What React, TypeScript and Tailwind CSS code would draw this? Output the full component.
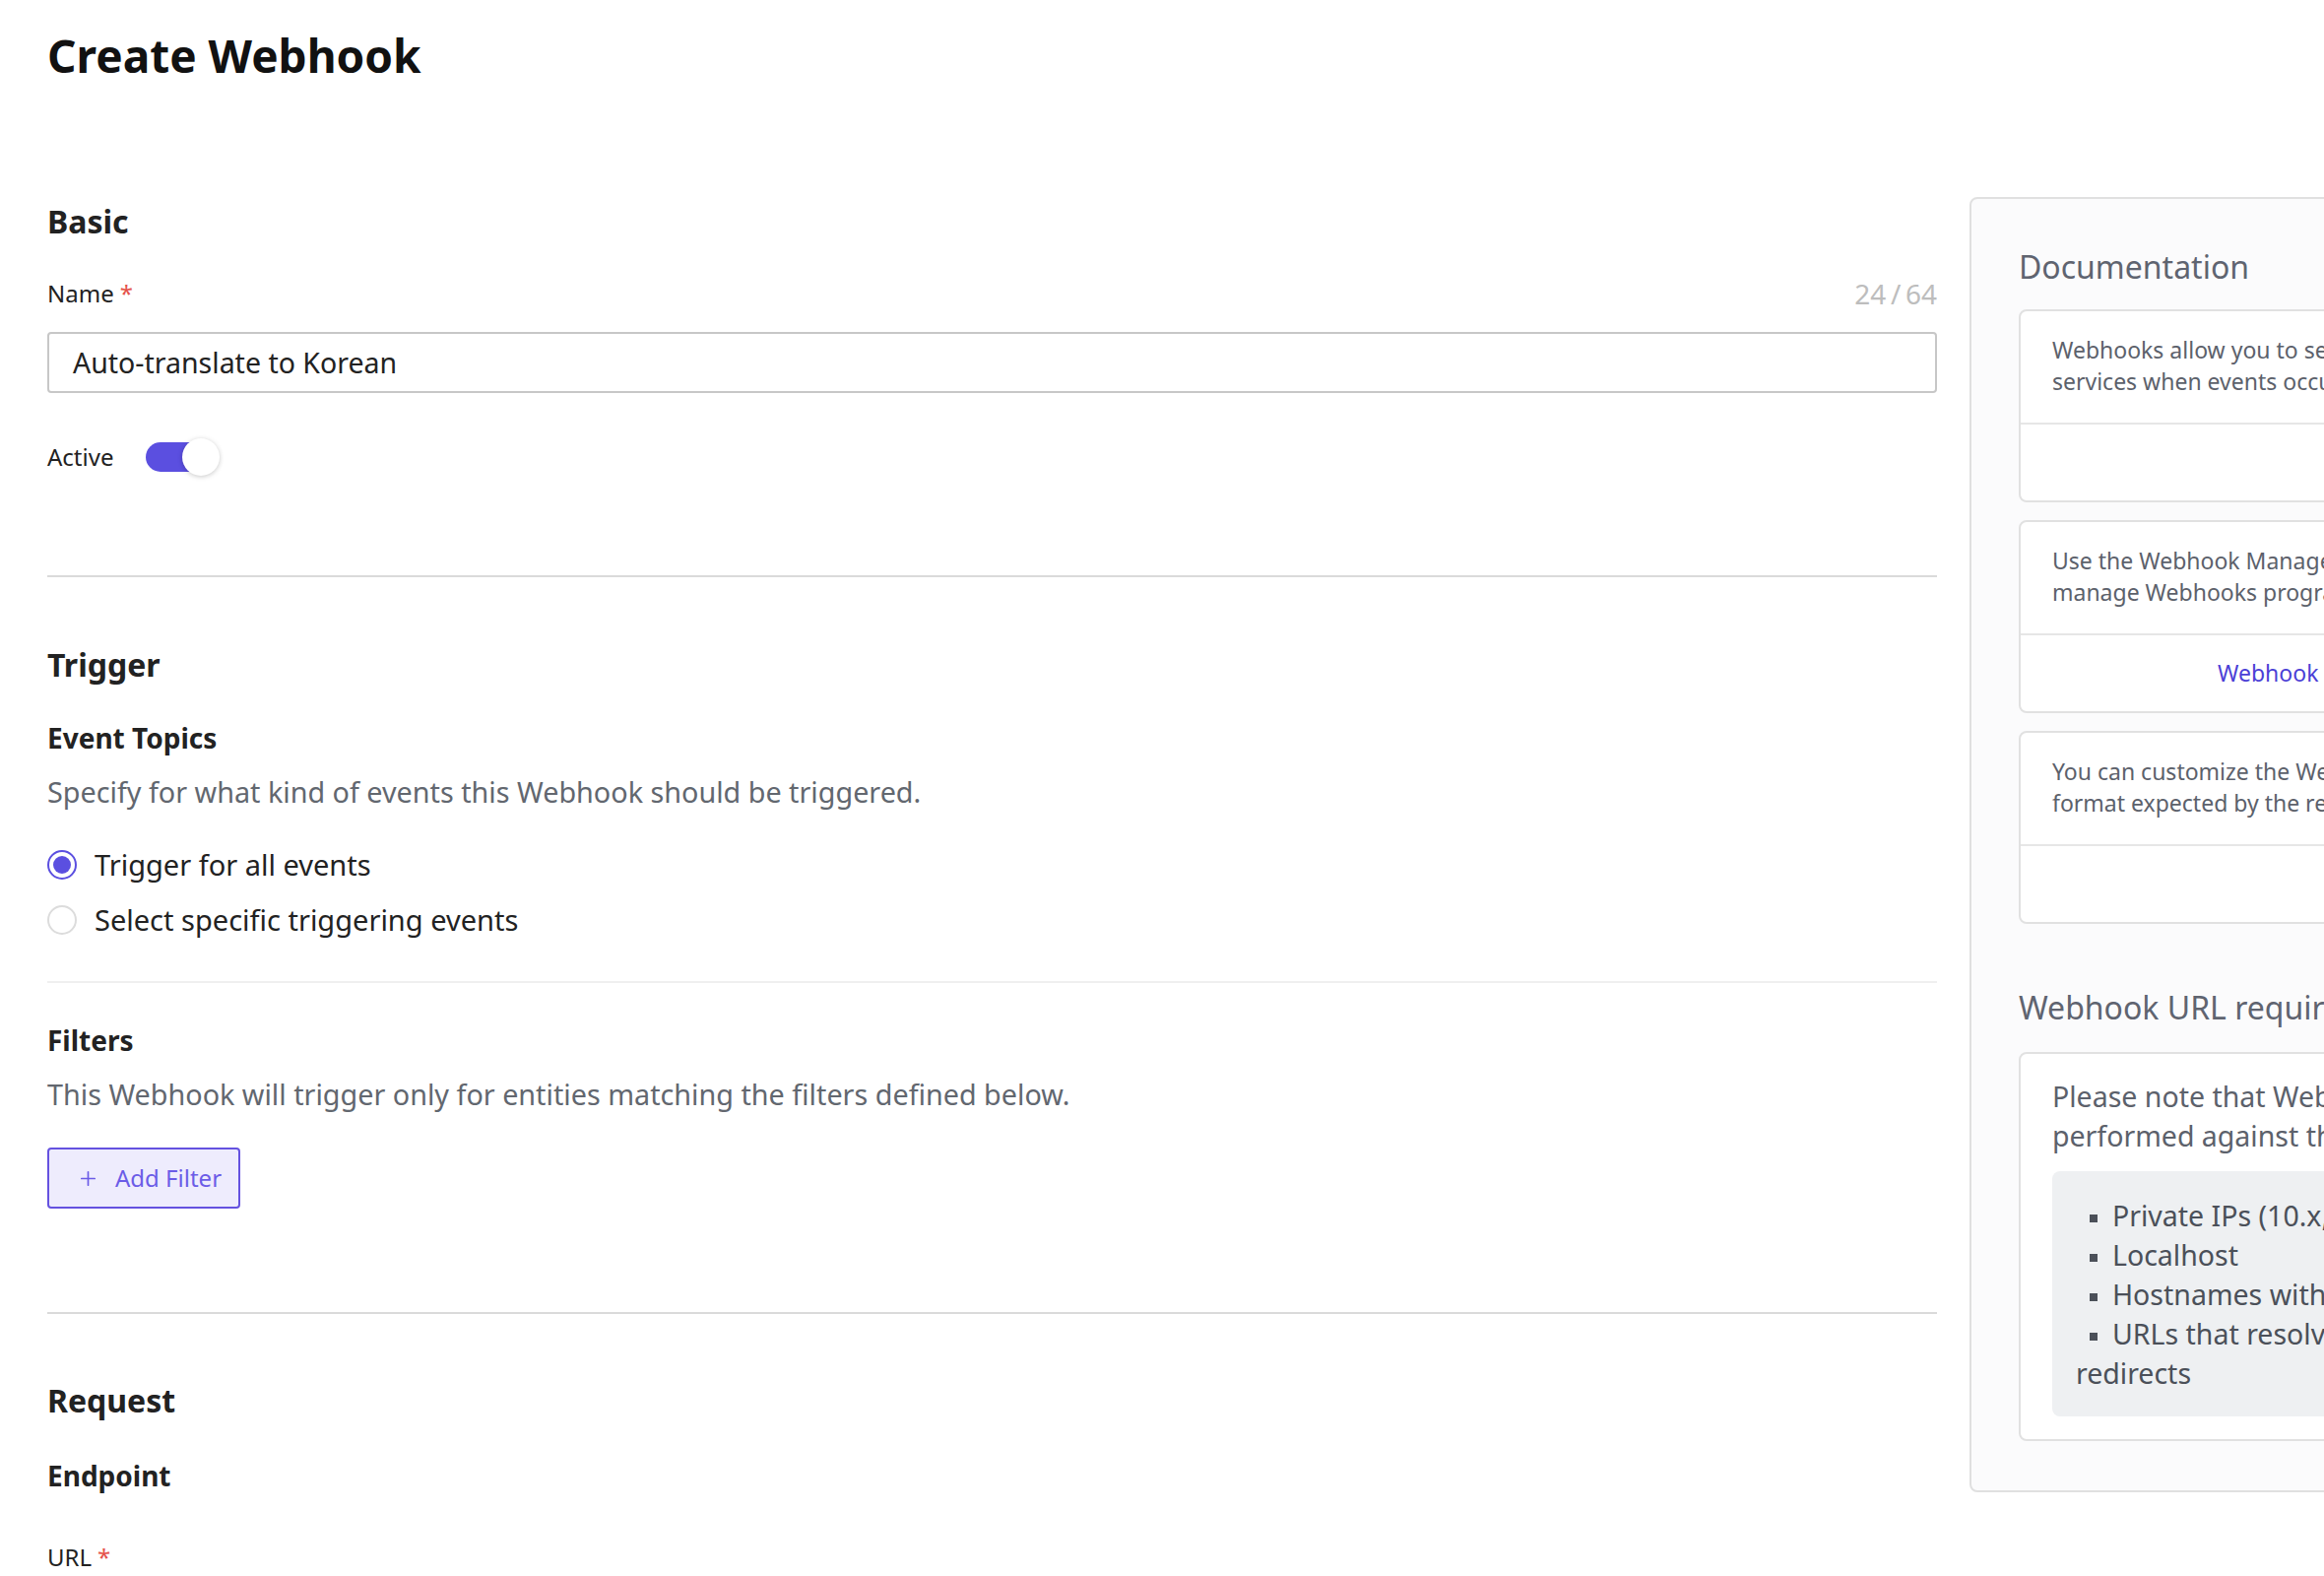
import { Plus } from 'lucide-react';

type RadioProps = { checked?: boolean; label: string; className?: string };

const Radio = ({ checked, label, className }: RadioProps) => (
  <div className={`flex h-10 items-center gap-[18px] ${className ?? ''}`}>
    <span
      className={
        checked
          ? 'flex h-[30px] w-[30px] items-center justify-center rounded-full border-2 border-[#5b4fe0] bg-white'
          : 'flex h-[30px] w-[30px] items-center justify-center rounded-full border-2 border-[#dcdcdc] bg-white'
      }
    >
      {checked && <span className="h-[18px] w-[18px] rounded-full bg-[#5b4fe0]" />}
    </span>
    <span className="text-[29px] leading-10 text-[#222]">{label}</span>
  </div>
);

type DocCardProps = { lines: [string, string]; link: string };

const DocCard = ({ lines, link }: DocCardProps) => (
  <div className="rounded-lg border-2 border-[#e1e1e1] bg-white">
    <p className="px-8 pt-[23px] pb-[26px] text-[23px] leading-8 whitespace-nowrap text-[#5c616b]">
      {lines[0]}
      <br />
      {lines[1]}
    </p>
    <div className="flex h-[79px] items-center justify-center border-t-2 border-[#e6e6e6] text-[23px] text-[#4b3fd6]">
      {link}
    </div>
  </div>
);

const urlRules = [
  'Private IPs (10.x, 192.168.x, 172.16.x)',
  'Localhost',
  'Hostnames without a top-level domain',
];

const LeftForm = () => (
  <div className="w-[1919px] shrink-0">
    {/* Basic */}
    <h2 className="mt-[5px] text-[32px] leading-10 font-bold text-[#222]">Basic</h2>
    <div className="mt-[37px] flex h-8 items-center justify-between">
      <label className="text-[24px] leading-8 text-[#222]">
        Name<span className="ml-[6px] text-[#e5534b]">*</span>
      </label>
      <span className="text-[28px] leading-8 text-[#bdbdbd]">24{'\u2009'}/{'\u2009'}64</span>
    </div>
    <div className="mt-[23px] flex h-[62px] items-center rounded border-2 border-[#c7c7c7] px-6 text-[28.5px] text-[#222]">
      Auto-translate to Korean
    </div>
    <div className="mt-[45px] flex h-10 items-center gap-[33px]">
      <span className="text-[24px] text-[#222]">Active</span>
      <div className="relative h-[38px] w-[75px]">
        <div className="absolute top-1 left-0 h-[30px] w-[66px] rounded-full bg-[#5b4fe0]" />
        <div className="absolute top-0 right-0 h-[38px] w-[38px] rounded-full bg-white shadow-[0_1px_5px_rgba(0,0,0,0.22)]" />
      </div>
    </div>

    <div className="mt-[100px] h-[2px] bg-[#dadada]" />

    {/* Trigger */}
    <h2 className="mt-[69px] text-[32px] leading-10 font-bold text-[#222]">Trigger</h2>
    <h3 className="mt-[36px] text-[28px] leading-9 font-bold text-[#222]">Event Topics</h3>
    <p className="mt-[17px] text-[28.75px] leading-10 text-[#62676f]">
      Specify for what kind of events this Webhook should be triggered.
    </p>
    <Radio checked label="Trigger for all events" className="mt-[34px]" />
    <Radio label="Select specific triggering events" className="mt-4" />

    <div className="mt-[42px] h-[2px] bg-[#efefef]" />

    <h3 className="mt-[40px] text-[28px] leading-9 font-bold text-[#222]">Filters</h3>
    <p className="mt-[17px] text-[28.75px] leading-10 text-[#62676f]">
      This Webhook will trigger only for entities matching the filters defined below.
    </p>
    <button className="mt-[34px] flex h-[62px] w-[196px] items-center gap-4 rounded border-2 border-[#6552e0] bg-[#eeecfd] pl-[28px] text-[24px] text-[#6b5ce7]">
      <Plus size={23} strokeWidth={1.75} />
      Add Filter
    </button>

    <div className="mt-[105px] h-[2px] bg-[#dadada]" />

    {/* Request */}
    <h2 className="mt-[68px] text-[32px] leading-10 font-bold text-[#222]">Request</h2>
    <h3 className="mt-[38px] text-[28px] leading-9 font-bold text-[#222]">Endpoint</h3>
    <label className="mt-[49px] block text-[24px] leading-8 text-[#222]">
      URL<span className="ml-[6px] text-[#e5534b]">*</span>
    </label>
    <div className="mt-[23px] h-[62px] rounded border-2 border-[#c7c7c7]" />
  </div>
);

const DocsPanel = () => (
  <aside className="w-[920px] shrink-0 rounded-lg border-2 border-[#e0e0e0] bg-[#fbfbfc] px-12 pt-[47px] pb-[50px]">
    <h3 className="text-[32px] leading-[44px] text-[#5f6470]">Documentation</h3>
    <div className="mt-[21px] flex flex-col gap-[18px]">
      <DocCard
        lines={['Webhooks allow you to send notifications to external', 'services when events occur in your space.']}
        link="Read more"
      />
      <DocCard
        lines={['Use the Webhook Management API to create and', 'manage Webhooks programmatically.']}
        link="Webhook Management API references"
      />
      <DocCard
        lines={['You can customize the Webhook payload to match the', 'format expected by the receiving service.']}
        link="Read more"
      />
    </div>

    <h3 className="mt-[63px] text-[32px] leading-[44px] text-[#5f6470]">Webhook URL requirements</h3>
    <div className="mt-[23px] rounded-lg border-2 border-[#e1e1e1] bg-white px-8 pt-[23px] pb-[23px]">
      <p className="text-[28.5px] leading-10 whitespace-nowrap text-[#5c616b]">
        Please note that Webhook calls will not be
        <br />
        performed against the following URLs:
      </p>
      <div className="mt-4 rounded-lg bg-[#eef0f2] px-6 pt-[25px] pb-[24px] text-[28.5px] leading-10 whitespace-nowrap text-[#4b5059]">
        {urlRules.map((rule) => (
          <div key={rule}>
            <span className="mr-[15px] ml-[14px] inline-block h-2 w-2 bg-[#4b5059] align-middle" />
            {rule}
          </div>
        ))}
        <div>
          <span className="mr-[15px] ml-[14px] inline-block h-2 w-2 bg-[#4b5059] align-middle" />
          URLs that resolve to private addresses via
          <br />
          redirects
        </div>
      </div>
    </div>
  </aside>
);

export default function App() {
  return (
    <div className="h-[1600px] w-[2360px] overflow-hidden bg-white font-['Noto_Sans',sans-serif] text-[#222]">
      <div className="px-12">
        <h1 className="pt-8 text-[46px] leading-[48px] font-bold text-[#111]">Create Webhook</h1>
        <div className="mt-[120px] flex items-start gap-[33px]">
          <LeftForm />
          <DocsPanel />
        </div>
      </div>
    </div>
  );
}
